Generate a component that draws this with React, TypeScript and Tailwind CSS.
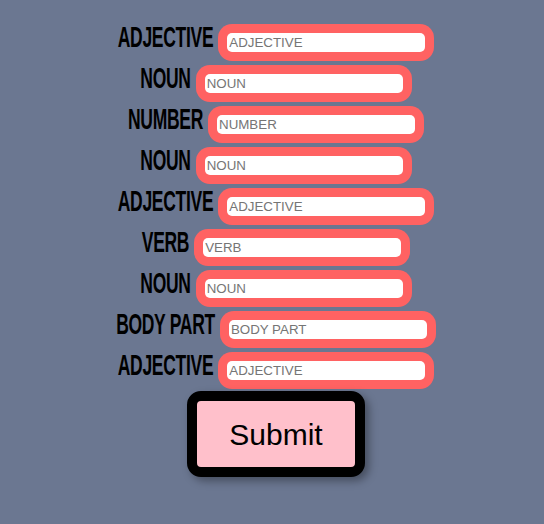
const fields = [
  "ADJECTIVE",
  "NOUN",
  "NUMBER",
  "NOUN",
  "ADJECTIVE",
  "VERB",
  "NOUN",
  "BODY PART",
  "ADJECTIVE",
];

function Field({ label }: { label: string }) {
  return (
    <div className="flex items-baseline justify-center gap-[5px]">
      <span className="inline-block origin-bottom translate-y-[2.5px] scale-y-[1.68] font-['Liberation_Sans',Arial,sans-serif] text-[17.5px] font-bold leading-none tracking-[-0.3px] text-black">
        {label}
      </span>
      <div className="inline-flex rounded-[14px] bg-[#ff6262] p-[9px]">
        <input
          type="text"
          placeholder={label}
          className="h-[19px] w-[198px] rounded-[5px] bg-white px-[2px] font-['Liberation_Sans',Arial,sans-serif] text-[13.33px] text-black outline-none placeholder:text-[#757575]"
        />
      </div>
    </div>
  );
}

export default function App() {
  return (
    <div className="min-h-[524px] w-full bg-[#6b7791] pl-[8px] pt-[24px]">
      <div className="flex flex-col gap-[4px]">
        {fields.map((f, i) => (
          <Field key={i} label={f} />
        ))}
      </div>
      <div className="flex justify-center pt-[2px]">
        <button className="h-[86px] w-[178px] rounded-[14px] border-[10px] border-black bg-[#ffc0cb] font-['Liberation_Sans',Arial,sans-serif] text-[30px] text-black shadow-[4px_4px_8px_rgba(0,0,0,0.35)]">
          Submit
        </button>
      </div>
    </div>
  );
}
